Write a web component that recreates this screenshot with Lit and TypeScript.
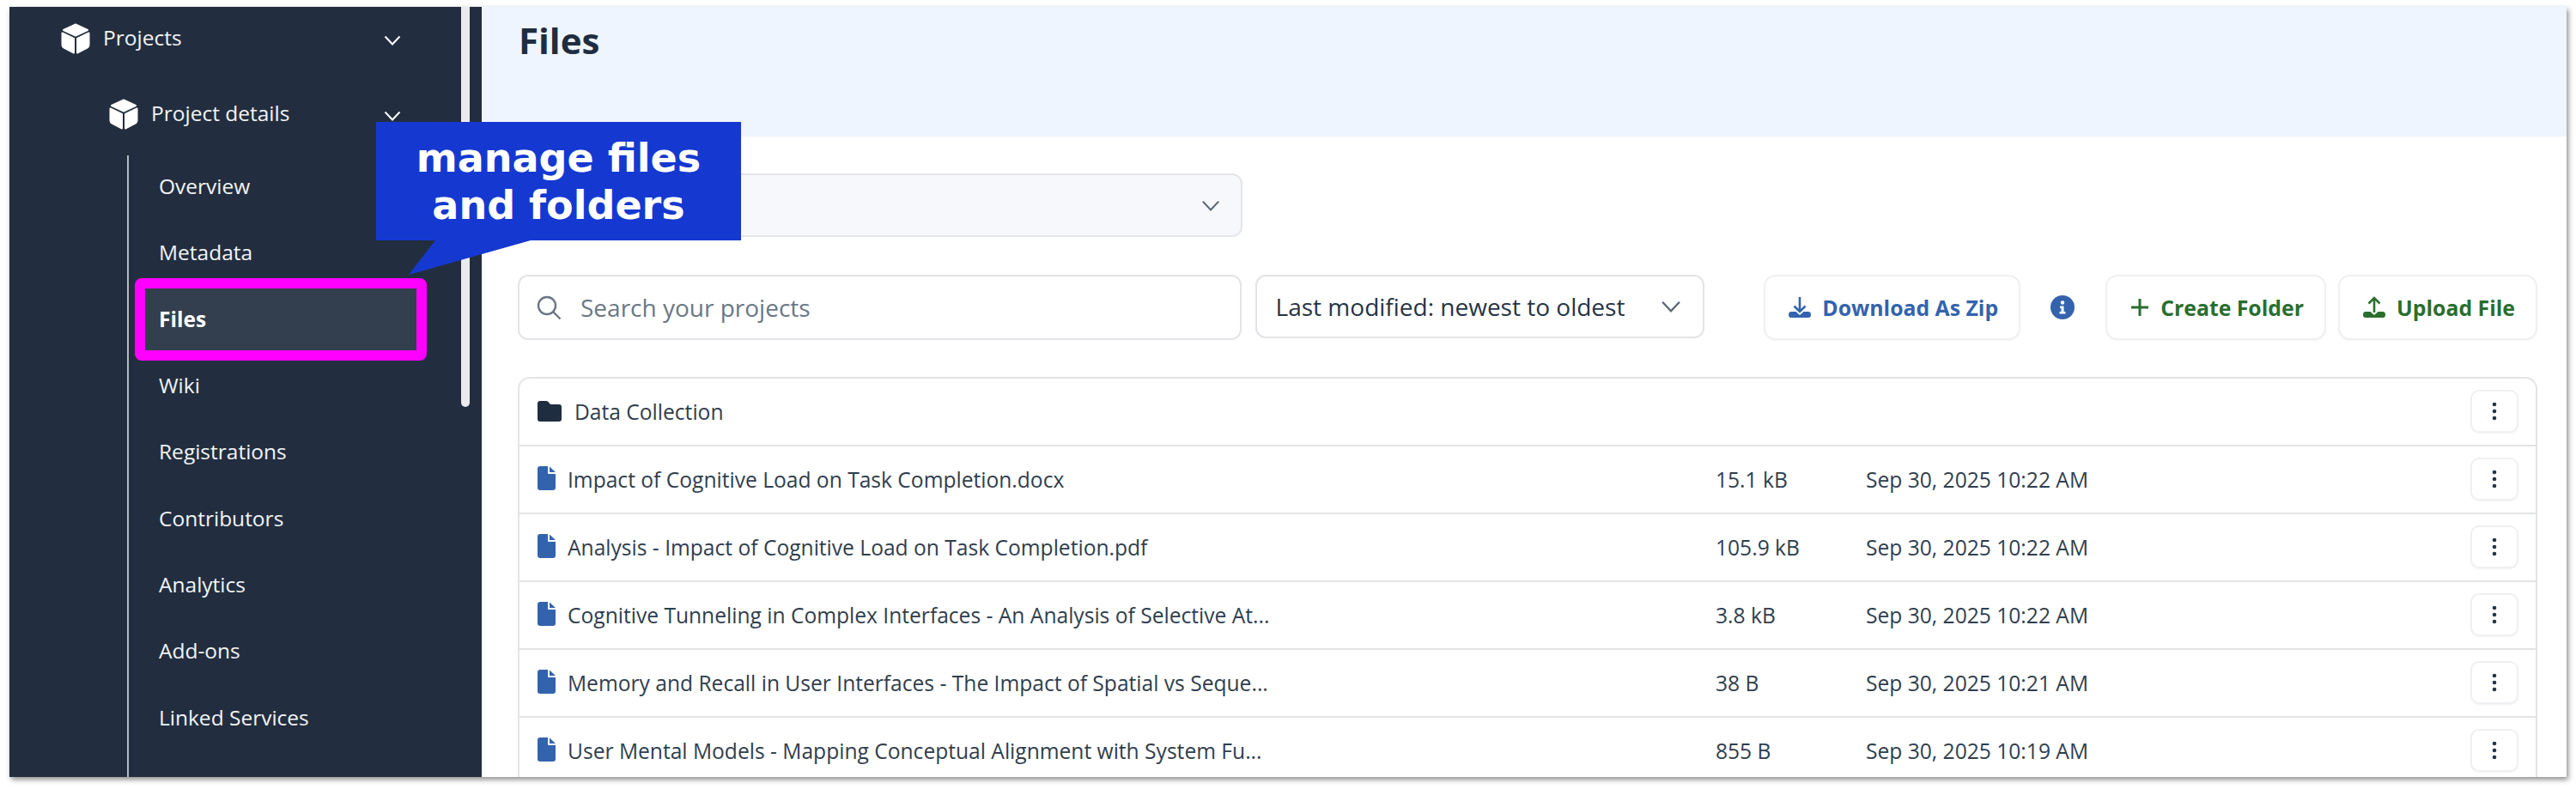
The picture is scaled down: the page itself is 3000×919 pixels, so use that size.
import { LitElement, html, css, svg } from "lit";
import { customElement } from "lit/decorators.js";

const NAV = ["Overview", "Metadata", "Files", "Wiki", "Registrations", "Contributors", "Analytics", "Add-ons", "Linked Services", "Settings"];
const FILES = [
  ["Impact of Cognitive Load on Task Completion.docx", "15.1 kB", "Sep 30, 2025 10:22 AM"],
  ["Analysis - Impact of Cognitive Load on Task Completion.pdf", "105.9 kB", "Sep 30, 2025 10:22 AM"],
  ["Cognitive Tunneling in Complex Interfaces - An Analysis of Selective At...", "3.8 kB", "Sep 30, 2025 10:22 AM"],
  ["Memory and Recall in User Interfaces - The Impact of Spatial vs Seque...", "38 B", "Sep 30, 2025 10:21 AM"],
  ["User Mental Models - Mapping Conceptual Alignment with System Fu...", "855 B", "Sep 30, 2025 10:19 AM"],
];

const cube = () => html`<svg class="cube" viewBox="0 0 34 36"><g fill="#fff" stroke="#fff" stroke-width="2" stroke-linejoin="round">${svg`<path d="M17 1.5 L31 8 L17 14.5 L3 8Z"/><path d="M1.5 11.5 L15 18 V34.5 L3.5 28.5 Q1.5 27.5 1.5 25.5Z"/><path d="M32.5 11.5 L19 18 V34.5 L30.5 28.5 Q32.5 27.5 32.5 25.5Z"/>`}</g></svg>`;
const chevron = (cls: string) => html`<svg class=${cls} viewBox="0 0 20 12"><path d="M1.5 1.5 L10 10.5 L18.5 1.5" fill="none" stroke="currentColor" stroke-width="2"/></svg>`;
const kebab = () => html`<svg class="kebab" viewBox="0 0 6 22"><circle cx="3" cy="3" r="2.3"/><circle cx="3" cy="11" r="2.3"/><circle cx="3" cy="19" r="2.3"/></svg>`;
const fileIcon = () => html`<svg class="file" viewBox="0 0 21 28"><path d="M3 0H12V8Q12 9 13 9H21V25Q21 28 18 28H3Q0 28 0 25V3Q0 0 3 0Z M14 0.5 L21 7 H14Z"/></svg>`;
const folderIcon = () => html`<svg class="folder" viewBox="0 0 28 24"><path d="M3 0H10Q11.5 0 12.5 1L15 4H25Q28 4 28 7V21Q28 24 25 24H3Q0 24 0 21V3Q0 0 3 0Z"/></svg>`;
const tray = () => svg`<path d="M3 18H8.5L13 22L17.5 18H23Q26 18 26 21.5Q26 25 23 25H3Q0 25 0 21.5Q0 18 3 18Z"/>`;

@customElement("app-root")
export class AppRoot extends LitElement {
  static styles = css`
    :host { display: block; width: 3000px; height: 919px; overflow: hidden; padding: 8px 0 0 11px; box-sizing: border-box; background: #fff; font-family: "Open Sans", "Noto Sans", sans-serif; color: #2a3848; }
    * { box-sizing: border-box; }
    .window { position: relative; display: flex; width: 2978px; height: 897px; background: #fff; box-shadow: 2px 3px 6px rgba(0,0,0,.45); }
    .sidebar { position: relative; flex: 0 0 550px; height: 100%; overflow: hidden; background: #222e3f; color: #fff; font-size: 24.5px; }
    .scroll { position: absolute; left: 526px; top: 0; width: 10px; height: 466px; background: #e9ebee; border-radius: 0 0 5px 5px; }
    .row { display: flex; align-items: center; height: 74px; color: #f3f4f6; }
    .row.l1 { padding-left: 60px; }
    .row.l2 { padding-left: 116px; margin-top: 14px; }
    .row span { flex: 1; margin: -3px 0 0 15px; }
    .cube { width: 34px; height: 36px; flex: none; }
    .navchev { width: 20px; height: 12px; flex: none; color: #fff; margin-right: 94px; margin-top: 4px; }
    .sub { margin: 11px 0 0 137px; border-left: 2px solid #b4bac2; display: flex; flex-direction: column; gap: 5.33px; height: 800px; }
    .item { position: relative; flex: none; display: flex; align-items: center; height: 72px; width: 316px; margin-left: 19px; padding: 0 0 1px 16px; color: #f3f4f6; }
    .item.active { background: #333f4f; font-weight: 700; color: #fff; }
    .item.active::after { content: ""; position: absolute; inset: -12px; border: 12px solid #ff00ff; border-radius: 8px; }
    .main { flex: 1; min-width: 0; overflow: hidden; display: flex; flex-direction: column; }
    .hero { flex: none; height: 151px; background: #eef5fe; padding: 13px 0 0 43px; }
    h1 { margin: 0; font-size: 42px; line-height: 52px; font-weight: 700; color: #1f2d40; }
    .body { padding: 43px 34px 0 42px; }
    .select { display: flex; align-items: center; justify-content: flex-end; width: 844px; height: 74px; background: #f7f8fc; border: 2px solid #e4e6e9; border-radius: 12px; padding-right: 24px; color: #5d6875; }
    .selchev { width: 22px; height: 13px; flex: none; }
    .toolbar { display: flex; align-items: flex-start; margin-top: 44px; height: 76px; }
    .search { display: flex; align-items: center; width: 843px; height: 76px; border: 2px solid #e2e4e7; border-radius: 12px; padding-left: 20px; color: #6b7785; font-size: 28px; }
    .search svg { width: 29px; height: 29px; margin-right: 22px; fill: none; stroke: #6b7785; stroke-width: 2.4; }
    .sort { display: flex; align-items: center; justify-content: space-between; width: 524px; height: 74px; margin-left: 16px; border: 2px solid #e2e4e7; border-radius: 12px; padding: 0 24px 0 22px; font-size: 28px; color: #263445; }
    .sortchev { width: 26px; height: 14px; color: #5d6875; }
    .btn { display: flex; align-items: center; height: 76px; border: 2px solid #eff0f2; border-radius: 14px; font-weight: 700; font-size: 24.8px; background: #fff; box-shadow: 0 1px 2px rgba(0,0,0,.05); }
    .btn svg { flex: none; }
    .dl { width: 299px; margin-left: 69px; padding-left: 27px; color: #3463ad; }
    .cr { width: 257px; padding-left: 27px; color: #2a6e2e; }
    .up { width: 232px; margin-left: 14px; padding-left: 27px; color: #2a6e2e; }
    .btn span { margin-left: 13px; }
    .ico26 { width: 26px; height: 26px; }
    .plus { width: 22px; height: 22px; }
    .info { width: 28px; height: 28px; flex: none; margin: 24px 36px 0 35px; }
    .table { margin-top: 43px; width: 2352px; border: 2px solid #e2e4e6; border-bottom: 0; border-radius: 14px 14px 0 0; font-size: 24.6px; }
    .trow { display: grid; grid-template-columns: 1373px 175px 1fr 56px; align-items: center; height: 79px; padding: 0 20px 0 20px; border-bottom: 2px solid #e2e4e6; color: #303e4d; }
    .namecell { display: flex; align-items: center; padding-left: 1px; }
    .file { width: 21px; height: 28px; fill: #3463ad; flex: none; margin-right: 14px; margin-top: -4px; }
    .folder { width: 28px; height: 24px; fill: #1f2d40; flex: none; margin-right: 15px; margin-top: -2px; }
    .menu { display: flex; align-items: center; justify-content: center; width: 56px; height: 50px; border: 2px solid #eff0f2; border-radius: 10px; box-shadow: 0 1px 2px rgba(0,0,0,.05); margin-top: -2px; }
    .kebab { width: 6px; height: 22px; fill: #263445; }
    .callout { position: absolute; z-index: 5; left: 427px; top: 134px; width: 425px; height: 138px; background: #1539d0; color: #fff; font-family: "DejaVu Sans", sans-serif; font-weight: 700; font-size: 46px; line-height: 55px; text-align: center; padding-top: 15px; }
    .tail { position: absolute; left: 0; top: 100%; width: 180px; height: 40px; fill: #1539d0; }
  `;

  render() {
    return html`<div class="window">
      <aside class="sidebar">
        <div class="row l1">${cube()}<span>Projects</span>${chevron("navchev")}</div>
        <div class="row l2">${cube()}<span>Project details</span>${chevron("navchev")}</div>
        <nav class="sub">
          ${NAV.map((n) => html`<div class="item ${n === "Files" ? "active" : ""}">${n}</div>`)}
        </nav>
        <div class="scroll"></div>
      </aside>
      <main class="main">
        <header class="hero"><h1>Files</h1></header>
        <div class="body">
          <div class="select">${chevron("selchev")}</div>
          <div class="toolbar">
            <div class="search"><svg viewBox="0 0 29 29"><circle cx="12" cy="12" r="10"/><path d="M19 19L27.5 27.5"/></svg>Search your projects</div>
            <div class="sort">Last modified: newest to oldest ${chevron("sortchev")}</div>
            <div class="btn dl"><svg class="ico26" viewBox="0 0 26 26"><g fill="currentColor">${tray()}</g><path d="M13 1V18M6.5 11.5L13 18L19.5 11.5" fill="none" stroke="currentColor" stroke-width="2.6"/></svg><span>Download As Zip</span></div>
            <svg class="info" viewBox="0 0 28 28"><circle cx="14" cy="14" r="14" fill="#3463ad"/><circle cx="14" cy="8.5" r="2.2" fill="#fff"/><path d="M11 12.5H15.5V19H17.5V21.5H10.5V19H12.5V15H11Z" fill="#fff"/></svg>
            <div class="btn cr"><svg class="plus" viewBox="0 0 22 22"><path d="M11 1V21M1 11H21" stroke="currentColor" stroke-width="3" fill="none"/></svg><span>Create Folder</span></div>
            <div class="btn up"><svg class="ico26" viewBox="0 0 26 26"><g fill="currentColor">${tray()}</g><path d="M13 19V2M6.5 8.5L13 2L19.5 8.5" fill="none" stroke="currentColor" stroke-width="2.6"/></svg><span>Upload File</span></div>
          </div>
          <div class="table">
            <div class="trow">
              <div class="namecell">${folderIcon()}Data Collection</div><div></div><div></div>
              <div class="menu">${kebab()}</div>
            </div>
            ${FILES.map((f) => html`<div class="trow">
              <div class="namecell">${fileIcon()}${f[0]}</div><div>${f[1]}</div><div>${f[2]}</div>
              <div class="menu">${kebab()}</div>
            </div>`)}
          </div>
        </div>
      </main>
      <div class="callout">manage files<br />and folders
        <svg class="tail" viewBox="0 0 180 40"><path d="M69 0L38 40L180 0Z"/></svg>
      </div>
    </div>`;
  }
}
